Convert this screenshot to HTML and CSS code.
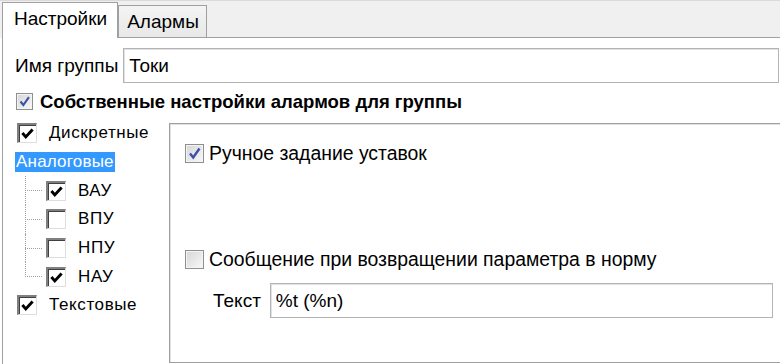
FILE: index.html
```html
<!DOCTYPE html>
<html>
<head>
    <meta charset="UTF-8">
    <title>Группа алармов</title>
    <link rel="stylesheet" href="styles.css">
</head>
<body>
    <div class="tabs">
        <div class="tab active">Настройки</div>
        <div class="tab">Алармы</div>
        <div class="tab-fill"></div>
    </div>

    <div class="page">
        <div class="name-row">
            <span class="label">Имя группы</span>
            <div class="field name-field">Токи</div>
        </div>

        <div class="own-row">
            <span class="cb on"><svg viewBox="0 0 17 17"><path d="M4 8.5 L7.2 12.5 L13.5 3.5" /></svg></span>
            <b>Собственные настройки алармов для группы</b>
        </div>

        <div class="body">
            <ul class="tree">
                <li class="node"><span class="ck on"><svg viewBox="0 0 15 15"><path d="M3 7 L6 10.5 L12 4" /></svg></span>Дискретные</li>
                <li class="node"><span class="sel">Аналоговые</span></li>
                <li class="child"><span class="branch"></span><span class="ck on"><svg viewBox="0 0 15 15"><path d="M3 7 L6 10.5 L12 4" /></svg></span>ВАУ</li>
                <li class="child"><span class="branch"></span><span class="ck"></span>ВПУ</li>
                <li class="child"><span class="branch"></span><span class="ck"></span>НПУ</li>
                <li class="child last"><span class="branch"></span><span class="ck on"><svg viewBox="0 0 15 15"><path d="M3 7 L6 10.5 L12 4" /></svg></span>НАУ</li>
                <li class="node"><span class="ck on"><svg viewBox="0 0 15 15"><path d="M3 7 L6 10.5 L12 4" /></svg></span>Текстовые</li>
            </ul>

            <div class="group">
                <div class="opt">
                    <span class="cb on"><svg viewBox="0 0 17 17"><path d="M4 8.5 L7.2 12.5 L13.5 3.5" /></svg></span>
                    Ручное задание уставок
                </div>
                <div class="opt back">
                    <span class="cb"></span>
                    Сообщение при возвращении параметра в норму
                </div>
                <div class="text-row">
                    <span class="label">Текст</span>
                    <div class="field text-field">%t (%n)</div>
                </div>
            </div>
        </div>
    </div>
</body>
</html>
```

FILE: styles.css
```css
body {
    margin: 0;
    background-color: #fff;
    font-family: "Liberation Sans", Arial, sans-serif;
    font-size: 19px;
    color: #000;
    overflow: hidden;
}

/* tab strip */
.tabs {
    display: flex;
    align-items: flex-end;
    height: 38px;
    padding-left: 2px;
    background-color: #f0f0f0;
    border-top: 1px solid #dadada;
    box-sizing: border-box;
}
.tab {
    height: 33px;
    padding: 0 7px 0 8px;
    line-height: 31px;
    border: 1px solid #a0a0a0;
    box-sizing: border-box;
    background: linear-gradient(#f4f4f4, #e8e8e8);
}
.tab.active {
    height: 36px;
    padding: 0 10px 0 11px;
    line-height: 32px;
    border-bottom: none;
    background: #fff;
}
.tab-fill {
    flex: 1;
    border-bottom: 1px solid #a0a0a0;
}

/* page */
.page {
    margin-left: 2px;
    height: 326px;
    padding: 10px 0 0 12px;
    border-left: 1px solid #a0a0a0;
    box-sizing: border-box;
}
.name-row {
    display: flex;
    align-items: center;
    gap: 5px;
}
.field {
    height: 35px;
    padding-left: 5px;
    line-height: 33px;
    border: 1px solid #b4b4b4;
    box-shadow: inset 1px 1px 0 #e2e2e2;
    box-sizing: border-box;
    background: #fff;
}
.name-field {
    width: 656px;
}
.own-row {
    display: flex;
    align-items: center;
    gap: 7px;
    margin: 10px 0 0 1px;
    height: 17px;
}
.own-row b {
    font-size: 18.5px;
    font-weight: bold;
}

/* win7 style checkbox */
.cb {
    display: inline-block;
    width: 17px;
    height: 17px;
    border: 1px solid #8e8f8f;
    box-sizing: border-box;
    background: linear-gradient(135deg, #d6d6d6, #f8f8f8);
    box-shadow: inset 0 0 0 1px #f4f4f4;
    flex: none;
}
.cb svg {
    display: block;
    width: 15px;
    height: 15px;
}
.cb path {
    fill: none;
    stroke: #3c52a8;
    stroke-width: 2.4;
}

/* classic checkbox */
.ck {
    display: inline-block;
    width: 20px;
    height: 20px;
    margin-right: 12px;
    border-top: 2px solid #808080;
    border-left: 2px solid #808080;
    border-right: 1px solid #dedede;
    border-bottom: 1px solid #dedede;
    box-shadow: inset 1px 1px 0 #404040;
    box-sizing: border-box;
    background: #fff;
    flex: none;
}
.ck svg {
    display: block;
    width: 17px;
    height: 17px;
}
.ck path {
    fill: none;
    stroke: #000;
    stroke-width: 2.6;
}

/* body: tree + group */
.body {
    display: flex;
    align-items: flex-start;
    margin: 9px 0 0 -12px;
}
.tree {
    list-style: none;
    width: 166px;
    margin: 0;
    padding: 0 0 0 12px;
    box-sizing: border-box;
    font-size: 17px;
    letter-spacing: 0.6px;
}
.tree li {
    display: flex;
    align-items: center;
    height: 28.7px;
}
.tree .node {
    padding-left: 2px;
}
.sel {
    margin-left: -2px;
    padding: 0 1px;
    line-height: 20px;
    background-color: #3399ff;
    color: #fff;
    letter-spacing: 0.2px;
}
.branch {
    align-self: stretch;
    width: 17px;
    margin: 0 3px 0 10px;
    border-left: 1px dotted #a0a0a0;
    background-image: linear-gradient(90deg, #a0a0a0 50%, transparent 50%);
    background-size: 2px 1px;
    background-repeat: repeat-x;
    background-position: 1px 50%;
    flex: none;
}
.last .branch {
    align-self: flex-start;
    height: 15px;
    background-position: 1px 100%;
}

.group {
    flex: 1;
    height: 240px;
    margin-top: 4px;
    padding: 20px 0 0 15px;
    border-top: 1px solid #a0a0a0;
    border-left: 1px solid #a0a0a0;
    border-bottom: 1px solid #a0a0a0;
    box-shadow: inset 1px 1px 0 #e0e0e0;
    box-sizing: border-box;
}
.opt {
    display: flex;
    align-items: center;
    gap: 5px;
    height: 19px;
    font-size: 19.4px;
}
.opt .cb {
    width: 19px;
    height: 19px;
}
.opt .cb svg {
    width: 17px;
    height: 17px;
}
.opt.back {
    margin-top: 87px;
}
.text-row {
    display: flex;
    align-items: center;
    gap: 9px;
    margin: 14px 0 0 28px;
    font-size: 19px;
}
.text-field {
    width: 503px;
}
```
